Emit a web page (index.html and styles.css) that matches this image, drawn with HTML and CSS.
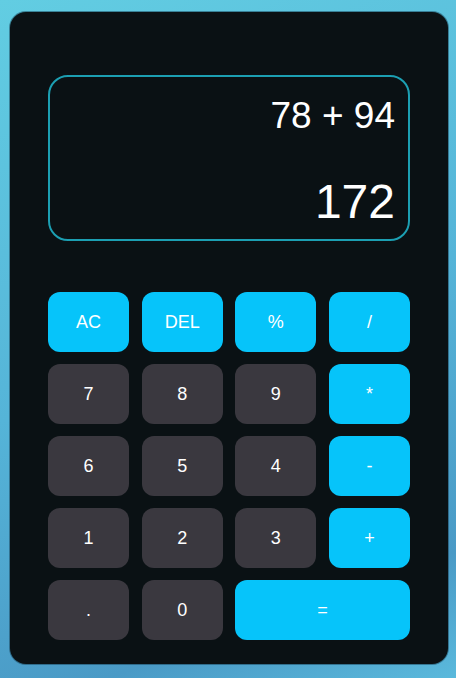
FILE: index.html
```html
<!DOCTYPE html>
<html lang="en">
<head>
<meta charset="utf-8">
<title>Calculator</title>
<link rel="stylesheet" href="styles.css">
</head>
<body>
<div class="calc">
  <div class="display">
    <div class="expr">78 + 94</div>
    <div class="result">172</div>
  </div>
  <div class="keys">
    <button class="key op">AC</button>
    <button class="key op">DEL</button>
    <button class="key op">%</button>
    <button class="key op">/</button>
    <button class="key">7</button>
    <button class="key">8</button>
    <button class="key">9</button>
    <button class="key op">*</button>
    <button class="key">6</button>
    <button class="key">5</button>
    <button class="key">4</button>
    <button class="key op">-</button>
    <button class="key">1</button>
    <button class="key">2</button>
    <button class="key">3</button>
    <button class="key op">+</button>
    <button class="key">.</button>
    <button class="key">0</button>
    <button class="key op wide">=</button>
  </div>
</div>
</body>
</html>
```
FILE: styles.css
```css
* { box-sizing: border-box; }
html, body { margin: 0; height: 100%; }
body {
  font-family: "Liberation Sans", Arial, sans-serif;
  background: linear-gradient(160deg, #62cde2 0%, #55b4d8 50%, #4a9ac6 85%, #5ab9dc 100%);
  padding: 12px 8px 14px 10px;
  overflow: hidden;
}
.calc {
  width: 438px;
  height: 652px;
  background: #0a1114;
  border-radius: 16px;
  box-shadow: 0 0 0 1px rgba(20, 60, 80, 0.5);
  padding: 63px 38px 0 38px;
}
.display {
  height: 166px;
  border: 2px solid #1c9fb2;
  border-radius: 20px;
  display: flex;
  flex-direction: column;
  justify-content: space-between;
  align-items: flex-end;
  padding: 18px 13px 10px 13px;
  color: #fff;
}
.expr { font-size: 37px; line-height: 42px; }
.result { font-size: 48px; line-height: 55px; }
.keys {
  margin-top: 51px;
  display: grid;
  grid-template-columns: repeat(4, 1fr);
  grid-auto-rows: 60px;
  column-gap: 12.5px;
  row-gap: 12px;
}
.key {
  border: none;
  border-radius: 12px;
  background: #3a383f;
  color: #fff;
  font-family: "Liberation Sans", Arial, sans-serif;
  font-size: 18px;
  padding: 0;
}
.key.op { background: #06c4fa; }
.key.wide { grid-column: span 2; }
```
